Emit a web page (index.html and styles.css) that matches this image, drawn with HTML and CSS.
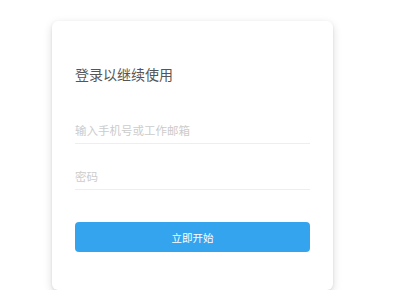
FILE: index.html
```html
<!DOCTYPE html>
<html lang="zh">
<head>
<meta charset="utf-8">
<link rel="stylesheet" href="styles.css">
</head>
<body>
<div class="page">
  <form class="card">
    <h1 class="title">登录以继续使用</h1>
    <input class="field" type="text" placeholder="输入手机号或工作邮箱">
    <input class="field field-pw" type="password" placeholder="密码">
    <button class="btn" type="button">立即开始</button>
  </form>
</div>
</body>
</html>
```
FILE: styles.css
```css
html, body {
  margin: 0;
  padding: 0;
  background: #ffffff;
}
.page {
  display: flex;
  padding: 21px 0 0 52px;
  font-family: "Noto Sans CJK SC", "Noto Sans", sans-serif;
}
.card {
  box-sizing: border-box;
  width: 281px;
  height: 269px;
  margin: 0;
  padding: 43px 23px 38px 23px;
  background: #fff;
  border-radius: 6px;
  box-shadow: 0 3px 10px rgba(0, 0, 0, 0.14), 0 1px 3px rgba(0, 0, 0, 0.08);
  display: flex;
  flex-direction: column;
}
.title {
  margin: 0 0 33px 0;
  font-size: 14px;
  line-height: 20px;
  font-weight: 400;
  color: #555555;
}
.field {
  box-sizing: content-box;
  display: block;
  margin: 0;
  padding: 0;
  height: 26px;
  border: none;
  border-bottom: 1px solid #eeeeee;
  outline: none;
  font-family: inherit;
  font-size: 11.5px;
  color: #333;
  background: transparent;
}
.field::placeholder {
  color: #cccccc;
}
.field-pw {
  margin-top: 19px;
}
.btn {
  margin-top: 32px;
  height: 30px;
  border: none;
  border-radius: 4px;
  background: #35a4ee;
  color: #fff;
  font-family: inherit;
  font-size: 10.5px;
  padding: 0;
}
```
